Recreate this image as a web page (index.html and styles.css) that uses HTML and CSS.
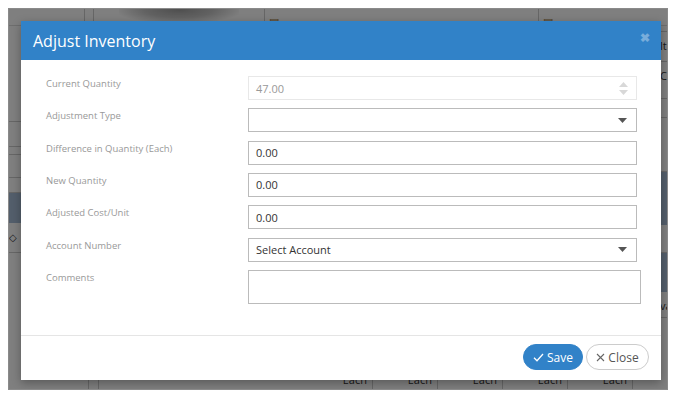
FILE: index.html
```html
<!DOCTYPE html>
<html lang="en">
<head>
  <meta charset="UTF-8">
  <meta name="viewport" content="width=device-width, initial-scale=1.0">
  <title>Adjust Inventory</title>
  <link rel="stylesheet" href="styles.css">
</head>
<body>

<div class="frame">
  <!-- page behind the dialog -->
  <div class="bg-page">
    <div class="bg-top">
      <div class="bg-cell bg-cell-a"></div>
      <div class="bg-cell bg-cell-b"></div>
      <div class="bg-cell bg-cell-c"><div class="bg-photo"></div></div>
      <div class="bg-cell bg-cell-d"><span class="bg-icon">&#9636;</span></div>
      <div class="bg-cell bg-cell-e"><span class="bg-icon">&#9636;</span></div>
    </div>
    <div class="bg-body">
      <div class="bg-side bg-side-left">
        <div class="bg-line"></div>
        <div class="bg-line"></div>
        <div class="bg-line"></div>
        <div class="bg-line"></div>
        <div class="bg-line"></div>
        <div class="bg-block"></div>
        <div class="bg-line bg-tag">&#9671;</div>
        <div></div>
      </div>
      <div class="bg-fill"></div>
      <div class="bg-side bg-side-right">
        <div class="bg-line"></div>
        <div class="bg-line bg-letters">lt</div>
        <div class="bg-line bg-letters">C</div>
        <div class="bg-line"></div>
        <div class="bg-line"></div>
        <div class="bg-block"></div>
        <div class="bg-line"></div>
        <div class="bg-block"></div>
        <div class="bg-line bg-letters">va</div>
        <div></div>
      </div>
    </div>
    <div class="bg-bottom">
      <div class="bg-bcell bg-bstart"></div>
      <div class="bg-bcell bg-bnarrow"></div>
      <div class="bg-bcell bg-bfirst"></div>
      <div class="bg-bcell">Each</div>
      <div class="bg-bcell">Each</div>
      <div class="bg-bcell">Each</div>
      <div class="bg-bcell">Each</div>
      <div class="bg-bcell">Each</div>
    </div>
  </div>
  <div class="backdrop"></div>

  <div class="modal">
    <div class="modal-header">
      <h4 class="modal-title">Adjust Inventory</h4>
      <span class="modal-close">&#10006;</span>
    </div>

    <div class="modal-body">
      <div class="form-row">
        <label>Current Quantity</label>
        <div class="field field-disabled">
          <span class="field-value">47.00</span>
          <span class="spinner">
            <svg width="9" height="5" viewBox="0 0 9 5"><path d="M4.5 0L9 5H0z" fill="#d8d8d8"/></svg>
            <svg width="9" height="5" viewBox="0 0 9 5"><path d="M0 0h9L4.5 5z" fill="#d8d8d8"/></svg>
          </span>
        </div>
      </div>
      <div class="form-row">
        <label>Adjustment Type</label>
        <div class="field">
          <span class="field-value"></span>
          <svg class="caret" width="9" height="5" viewBox="0 0 9 5"><path d="M0 0h9L4.5 5z" fill="#555"/></svg>
        </div>
      </div>
      <div class="form-row">
        <label>Difference in Quantity (Each)</label>
        <div class="field"><span class="field-value">0.00</span></div>
      </div>
      <div class="form-row">
        <label>New Quantity</label>
        <div class="field"><span class="field-value">0.00</span></div>
      </div>
      <div class="form-row">
        <label>Adjusted Cost/Unit</label>
        <div class="field"><span class="field-value">0.00</span></div>
      </div>
      <div class="form-row">
        <label>Account Number</label>
        <div class="field">
          <span class="field-value select-value">Select Account</span>
          <svg class="caret" width="9" height="5" viewBox="0 0 9 5"><path d="M0 0h9L4.5 5z" fill="#555"/></svg>
        </div>
      </div>
      <div class="form-row">
        <label>Comments</label>
        <div class="field field-textarea"></div>
      </div>
    </div>

    <div class="modal-footer">
      <button class="btn btn-save">
        <svg width="11" height="9" viewBox="0 0 11 9"><path d="M1 4.8l3 3L10 1" fill="none" stroke="#fff" stroke-width="1.3"/></svg>
        <span>Save</span>
      </button>
      <button class="btn btn-close">
        <svg width="9" height="9" viewBox="0 0 9 9"><path d="M1 1l7 7M8 1L1 8" fill="none" stroke="#666" stroke-width="1.1"/></svg>
        <span>Close</span>
      </button>
    </div>
  </div>
</div>

</body>
</html>
```

FILE: styles.css
```css
body {
  margin: 0;
  padding: 8px;
  background: #fff;
  font-family: "Open Sans", Arial, sans-serif;
}

.frame {
  position: relative;
  width: 658px;
  height: 380px;
  border: 1px solid #8a8a8a;
  overflow: hidden;
  background: #fff;
}

/* Page behind the dialog */
.bg-page {
  display: flex;
  flex-direction: column;
  height: 100%;
}

.bg-top {
  display: flex;
  height: 16px;
  border-bottom: 1px solid #ddd;
}

.bg-cell {
  border-right: 1px solid #ccc;
  height: 100%;
}

.bg-cell-a { width: 75px; }
.bg-cell-b { width: 8px; }
.bg-cell-c {
  width: 170px;
  display: flex;
  justify-content: center;
}
.bg-cell-d { width: 273px; }
.bg-cell-e { flex: 1; border-right: none; }

.bg-photo {
  width: 120px;
  height: 14px;
  background: radial-gradient(ellipse at 50% 10%, #a0a0a0 0%, #c4c4c4 40%, #fff 75%);
}

.bg-icon {
  font-size: 11px;
  color: #a07840;
  padding-left: 4px;
  line-height: 14px;
}

.bg-body {
  flex: 1;
  display: flex;
}

.bg-side {
  width: 13px;
  display: grid;
}

.bg-side-left {
  grid-template-rows: 96px 25px 8px 23px 15px 30px 30px 1fr;
}

.bg-side-right {
  width: 7px;
  grid-template-rows: 6px 30px 37px 19px 54px 53px 28px 39px 26px 1fr;
}

.bg-fill {
  flex: 1;
}

.bg-line {
  border-bottom: 1px solid #ccc;
  font-size: 11px;
  color: #333;
  line-height: 28px;
  overflow: hidden;
}

.bg-block {
  background: #a6bdd6;
}

.bg-tag {
  color: #333;
  font-size: 10px;
}

.bg-bottom {
  display: flex;
  height: 22px;
}

.bg-bcell {
  width: 65px;
  box-sizing: border-box;
  border-right: 1px solid #ccc;
  font-size: 11px;
  color: #333;
  text-align: right;
  padding: 6px 5px 0 0;
  line-height: 14px;
}

.bg-bstart {
  width: 80px;
}

.bg-bnarrow {
  width: 10px;
}

.bg-bfirst {
  width: 209px;
  border-right: none;
}

.backdrop {
  position: absolute;
  inset: 0;
  background: rgba(0, 0, 0, 0.5);
}

/* Dialog */
.modal {
  position: absolute;
  top: 12px;
  left: 12px;
  width: 640px;
  height: 359px;
  background: #fff;
  display: flex;
  flex-direction: column;
  box-shadow: 0 3px 9px rgba(0, 0, 0, 0.3);
}

.modal-header {
  height: 39px;
  background: #3182c8;
  display: flex;
  align-items: center;
  justify-content: space-between;
  padding: 0 11px 0 12px;
}

.modal-title {
  margin: 0;
  font-size: 16px;
  font-weight: normal;
  color: #fff;
  line-height: 20px;
}

.modal-close {
  color: #fff;
  opacity: 0.35;
  font-size: 12px;
  font-weight: bold;
  margin-top: -6px;
}

.modal-body {
  flex: 1;
  padding: 16px 20px 0 25px;
  display: flex;
  flex-direction: column;
  gap: 8.33px;
  border-bottom: 1px solid #e5e5e5;
}

.form-row {
  display: flex;
}

.form-row label {
  width: 202px;
  font-size: 9.5px;
  color: #999;
  padding-top: 1px;
  line-height: 14px;
}

.field {
  box-sizing: border-box;
  width: 389px;
  height: 24px;
  border: 1px solid #bbb;
  display: flex;
  align-items: center;
  padding: 0 10px 0 7px;
}

.field-disabled {
  border-color: #e8e8e8;
}

.field-disabled .field-value {
  color: #999;
}

.field-value {
  flex: 1;
  font-size: 11px;
  color: #333;
}

.select-value {
  font-size: 11px;
}

.spinner {
  display: flex;
  flex-direction: column;
  gap: 3px;
  margin-right: -2px;
}

.spinner svg,
.caret {
  display: block;
}

.caret {
  margin-right: -1px;
}

.field-textarea {
  width: 393px;
  height: 34px;
}

.modal-footer {
  height: 42px;
  display: flex;
  align-items: center;
  justify-content: flex-end;
  gap: 3px;
  padding: 0 12px 2px 0;
}

.btn {
  box-sizing: border-box;
  height: 26px;
  border-radius: 13px;
  font-family: "Open Sans", Arial, sans-serif;
  font-size: 12px;
  display: flex;
  align-items: center;
  justify-content: center;
  gap: 3px;
  padding: 0;
  cursor: pointer;
}

.btn svg {
  display: block;
}

.btn-save {
  width: 60px;
  background: #3182c8;
  border: 1px solid #3182c8;
  color: #fff;
}

.btn-close {
  width: 63px;
  background: #fff;
  border: 1px solid #ccc;
  color: #555;
}
```
